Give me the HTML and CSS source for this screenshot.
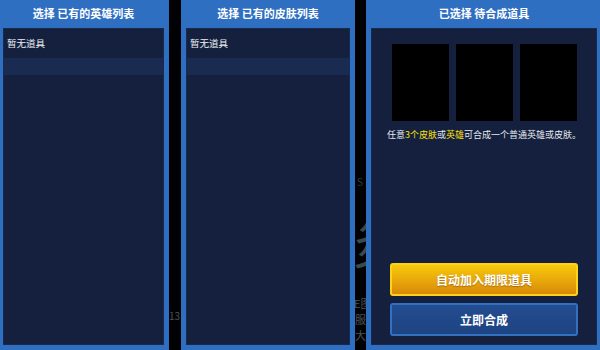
FILE: index.html
```html
<!DOCTYPE html>
<html lang="zh">
<head>
<meta charset="utf-8">
<title>合成</title>
<link rel="stylesheet" href="styles.css">
</head>
<body>
<div class="backdrop">
  <span class="bg-t bg-13">13</span>
  <span class="bg-t bg-s">S</span>
  <span class="bg-t bg-big">炎</span>
  <span class="bg-t bg-e">E图</span>
  <span class="bg-t bg-f">服</span>
  <span class="bg-t bg-d">大</span>
</div>
<div class="stage">
  <section class="panel p1">
    <header class="panel-head">选择 已有的英雄列表</header>
    <div class="panel-body">
      <div class="row">暂无道具</div>
      <div class="row row-alt"></div>
    </div>
  </section>
  <section class="panel p2">
    <header class="panel-head">选择 已有的皮肤列表</header>
    <div class="panel-body">
      <div class="row">暂无道具</div>
      <div class="row row-alt"></div>
    </div>
  </section>
  <section class="panel p3">
    <header class="panel-head">已选择 待合成道具</header>
    <div class="panel-body body3">
      <div class="slots">
        <div class="slot"></div>
        <div class="slot"></div>
        <div class="slot"></div>
      </div>
      <p class="tip">任意<em>3个皮肤</em>或<em>英雄</em>可合成一个普通英雄或皮肤。</p>
      <div class="actions">
        <button class="btn btn-gold">自动加入期限道具</button>
        <button class="btn btn-blue">立即合成</button>
      </div>
    </div>
  </section>
</div>
</body>
</html>
```

FILE: styles.css
```css
* { box-sizing: border-box; }
html, body {
  margin: 0;
  padding: 0;
  width: 600px;
  height: 350px;
  overflow: hidden;
  background: #020204;
  font-family: "Noto Sans CJK SC", "Noto Sans", sans-serif;
}
.backdrop {
  position: absolute;
  inset: 0;
  z-index: 0;
}
.bg-t {
  position: absolute;
  color: #4c5258;
  font-size: 10px;
  line-height: 1;
}
.bg-13 { left: 169px; top: 311px; }
.bg-s { left: 357px; top: 177px; color: #2a3a4a; }
.bg-big { left: 352px; top: 212px; font-size: 56px; color: #354a53; }
.bg-e { left: 354px; top: 298px; font-size: 11px; }
.bg-f { left: 355px; top: 314px; font-size: 11px; }
.bg-d { left: 355px; top: 330px; font-size: 11px; }

.stage {
  position: relative;
  z-index: 1;
  display: flex;
  gap: 12px;
  margin-left: -2px;
  height: 350px;
}
.panel {
  display: flex;
  flex-direction: column;
  background: #2f6fc2;
  padding: 0 5px 5px;
  height: 350px;
  flex: none;
}
.p1 { width: 171px; }
.p2 { width: 174px; }
.p3 { width: 236px; margin-left: -1px; }
.panel-head {
  height: 28px;
  line-height: 27px;
  text-align: center;
  color: #ffffff;
  font-size: 11px;
  font-weight: bold;
  flex: none;
}
.panel-body {
  flex: 1;
  background: #14203d;
  box-shadow: inset 0 0 0 1px #1a2a4c;
}
.row {
  height: 30px;
  line-height: 30px;
  padding-left: 4px;
  color: #eef1f6;
  font-size: 9.5px;
}
.row-alt {
  height: 17px;
  background: #1a2b52;
}
.body3 {
  display: flex;
  flex-direction: column;
  align-items: center;
  padding: 16px 0 9px;
}
.slots {
  display: flex;
  gap: 7px;
}
.slot {
  width: 57px;
  height: 77px;
  background: #000000;
}
.tip {
  margin: 8px 0 0;
  color: #e6e9ef;
  font-size: 9px;
  line-height: 12px;
  white-space: nowrap;
}
.tip em {
  font-style: normal;
  color: #ffe10a;
}
.actions {
  margin-top: auto;
  display: flex;
  flex-direction: column;
  gap: 7px;
}
.btn {
  width: 188px;
  height: 33px;
  border-radius: 3px;
  font-family: inherit;
  font-size: 12px;
  font-weight: bold;
  color: #ffffff;
  padding: 0;
  cursor: pointer;
}
.btn-gold {
  border: 2px solid #ffd21a;
  background: linear-gradient(#f6c90a, #e6a30a 60%, #d78a06);
  text-shadow: 0 1px 1px rgba(120, 60, 0, 0.5);
}
.btn-blue {
  border: 2px solid #3370c0;
  background: linear-gradient(#234d90, #1d4382);
}
```
